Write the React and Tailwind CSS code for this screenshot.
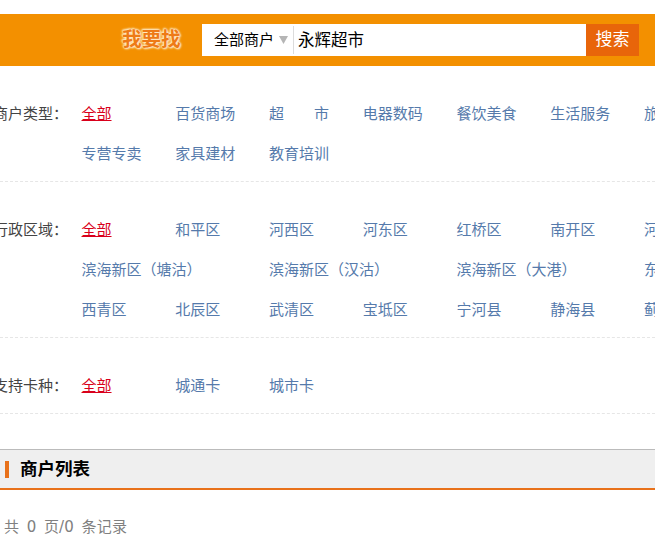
const font = "font-['Liberation_Sans','Noto_Sans_CJK_SC',sans-serif]";

const sections = [
  {
    label: "商户类型：",
    items: [
      "百货商场", "超市", "电器数码", "餐饮美食", "生活服务", "旅游娱乐",
      "专营专卖", "家具建材", "教育培训",
    ],
  },
  {
    label: "行政区域：",
    items: [
      "和平区", "河西区", "河东区", "红桥区", "南开区", "河北区",
      "滨海新区（塘沽）*", "滨海新区（汉沽）*", "滨海新区（大港）*", "东丽区",
      "西青区", "北辰区", "武清区", "宝坻区", "宁河县", "静海县", "蓟县",
    ],
  },
  {
    label: "支持卡种：",
    items: ["城通卡", "城市卡"],
  },
];

function FilterLink({ name }) {
  const wide = name.endsWith("*");
  const text = wide ? name.slice(0, -1) : name;
  if (text === "超市") {
    return (
      <a className="w-[93.75px] h-10 flex items-center text-[#557aab]">
        <span className="w-[60px] flex justify-between">
          <span>超</span>
          <span>市</span>
        </span>
      </a>
    );
  }
  return (
    <a className={`${wide ? "w-[187.5px]" : "w-[93.75px]"} h-10 flex items-center whitespace-nowrap text-[#557aab]`}>
      {text}
    </a>
  );
}

function FilterRow({ section }) {
  return (
    <div className="flex border-b border-dashed border-[#e6e6e6] mb-[28px] last:mb-0">
      <div className="w-[61px] shrink-0 h-10 flex items-center justify-end text-[#444]">
        <span className="whitespace-nowrap mr-[-7px]">{section.label}</span>
      </div>
      <div className="ml-[20.5px] w-[657px] shrink-0 flex flex-wrap content-start pb-[7px]">
        <a className="w-[93.75px] h-10 flex items-center text-[#d9001b]">
          <span className="underline">全部</span>
        </a>
        {section.items.map((name) => (
          <FilterLink key={name} name={name} />
        ))}
      </div>
    </div>
  );
}

export default function App() {
  return (
    <div className={`w-[655px] h-[550px] overflow-hidden bg-white text-[15px] ${font}`}>
      {/* Search bar */}
      <div className="mt-[14px] h-[52px] bg-[#f39000] flex items-center pl-[122px] pr-4">
        <div className="w-[80px] shrink-0 text-[19.5px] leading-none font-bold text-[#ee7a16] [text-shadow:0_0_1px_#ffe9c4,0_0_2px_#ffe9c4,0_0_3px_#ffe9c4,1px_1px_2px_#ffe9c4,-1px_-1px_2px_#ffe9c4]">
          我要找
        </div>
        <div className="flex-1 h-8 bg-white flex items-center">
          <span className="ml-3 text-black whitespace-nowrap">全部商户</span>
          <svg className="ml-[5px] shrink-0" width="9" height="8" viewBox="0 0 9 8">
            <path d="M0 0h9L4.5 8z" fill="#b5b5b5" />
          </svg>
          <span className="ml-[5px] w-px h-[28px] bg-[#dcdcdc]" />
          <span className="ml-1 flex-1 text-[16.5px] text-black whitespace-nowrap pt-px">永辉超市</span>
          <button className="w-[53px] h-8 bg-[#e8650a] text-[#fff] text-[17px]">搜索</button>
        </div>
      </div>

      {/* Filters */}
      <div className="pt-[28px]">
        {sections.map((section) => (
          <FilterRow key={section.label} section={section} />
        ))}
      </div>

      {/* List header */}
      <div className="mt-[35px] h-[41px] bg-[#efefef] border-t border-[#bbbbbb] border-b-2 border-b-[#e8711a] flex items-center pl-[5px]">
        <span className="w-1 h-[17px] bg-[#e8711a]" />
        <h2 className="ml-[11px] text-[17.5px] font-bold text-black">商户列表</h2>
      </div>
      <div className="mt-[26px] pl-1 text-[#808080] whitespace-pre text-[15px] tracking-[0.2px] [word-spacing:2.5px] font-['DejaVu_Sans','Noto_Sans_CJK_SC',sans-serif]">
        共 0 页/0 条记录
      </div>
    </div>
  );
}
